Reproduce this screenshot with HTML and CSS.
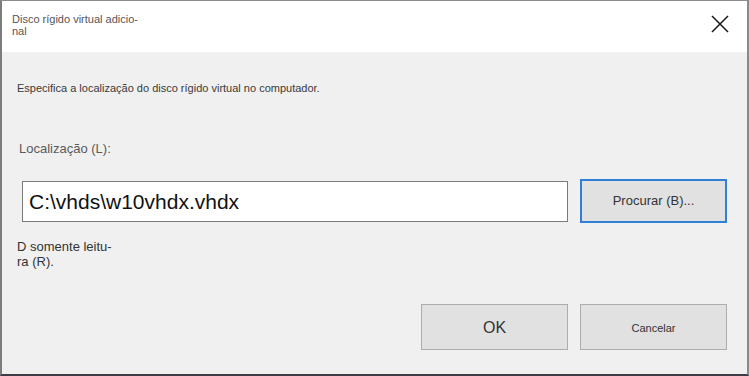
FILE: index.html
```html
<!DOCTYPE html>
<html lang="pt">
<head>
<meta charset="utf-8">
<link rel="stylesheet" href="styles.css">
</head>
<body>
<div class="window">
  <div class="titlebar">
    <div class="title">Disco rígido virtual adicio-<br>nal</div>
    <button class="close" aria-label="Fechar">
      <svg width="18" height="18" viewBox="0 0 18 18"><path d="M1 1 L17 17 M17 1 L1 17" stroke="#1e1e1e" stroke-width="1.6" fill="none"/></svg>
    </button>
  </div>
  <div class="content">
    <p class="desc">Especifica a localização do disco rígido virtual no computador.</p>
    <p class="label">Localização (L):</p>
    <div class="pathrow">
      <div class="input">C:\vhds\w10vhdx.vhdx</div>
      <div class="btn btn-focus">Procurar (B)...</div>
    </div>
    <p class="readonly">D somente leitu-<br>ra (R).</p>
    <div class="actions">
      <div class="btn btn-ok">OK</div>
      <div class="btn btn-cancel">Cancelar</div>
    </div>
  </div>
</div>
</body>
</html>
```
FILE: styles.css
```css
* { box-sizing: border-box; }
html, body { margin: 0; padding: 0; }
body {
  width: 749px;
  height: 376px;
  overflow: hidden;
  font-family: "Liberation Sans", Arial, sans-serif;
  background: #f0f0f0;
}
.window {
  width: 749px;
  height: 376px;
  border-top: 1px solid #8c8c8c;
  border-left: 2px solid #7c7c7c;
  border-right: 2px solid #8a8a8a;
  border-bottom: 2px solid #3c3c44;
  background: #f0f0f0;
  display: flex;
  flex-direction: column;
}
.titlebar {
  height: 51px;
  background: #ffffff;
  display: flex;
  justify-content: space-between;
  align-items: flex-start;
  flex-shrink: 0;
}
.title {
  margin: 12px 0 0 10px;
  font-size: 11px;
  line-height: 12px;
  color: #555555;
}
.close {
  margin: 14px 18px 0 0;
  padding: 0;
  border: 0;
  background: transparent;
  width: 18px;
  height: 18px;
  display: block;
}
.close svg { display: block; }
.content {
  padding: 0 20px 0 15px;
  display: flex;
  flex-direction: column;
}
.desc {
  margin: 30px 0 0 0;
  font-size: 11px;
  line-height: 13px;
  color: #3a3a3a;
}
.label {
  margin: 46px 0 0 2px;
  font-size: 13px;
  line-height: 15px;
  color: #5a5a5a;
}
.pathrow {
  margin: 23px 0 0 5px;
  display: flex;
  gap: 12px;
  align-items: flex-start;
}
.input {
  margin-top: 2px;
  width: 546px;
  height: 41px;
  border: 1px solid #7a7a7a;
  background: #ffffff;
  font-size: 21px;
  line-height: 39px;
  padding-left: 6px;
  color: #111111;
}
.btn {
  width: 147px;
  background: #e1e1e1;
  border: 1px solid #adadad;
  display: flex;
  align-items: center;
  justify-content: center;
  color: #333333;
}
.btn-focus {
  height: 44px;
  border: 2px solid #2f7fd6;
  font-size: 13px;
  padding-bottom: 2px;
}
.readonly {
  margin: 16px 0 0 0;
  font-size: 13px;
  line-height: 15px;
  color: #333333;
}
.actions {
  margin-top: 35px;
  display: flex;
  justify-content: flex-end;
  gap: 12px;
}
.btn-ok {
  height: 46px;
  font-size: 16px;
  padding-top: 1px;
}
.btn-cancel {
  height: 46px;
  font-size: 11px;
  padding-top: 1px;
}
```
